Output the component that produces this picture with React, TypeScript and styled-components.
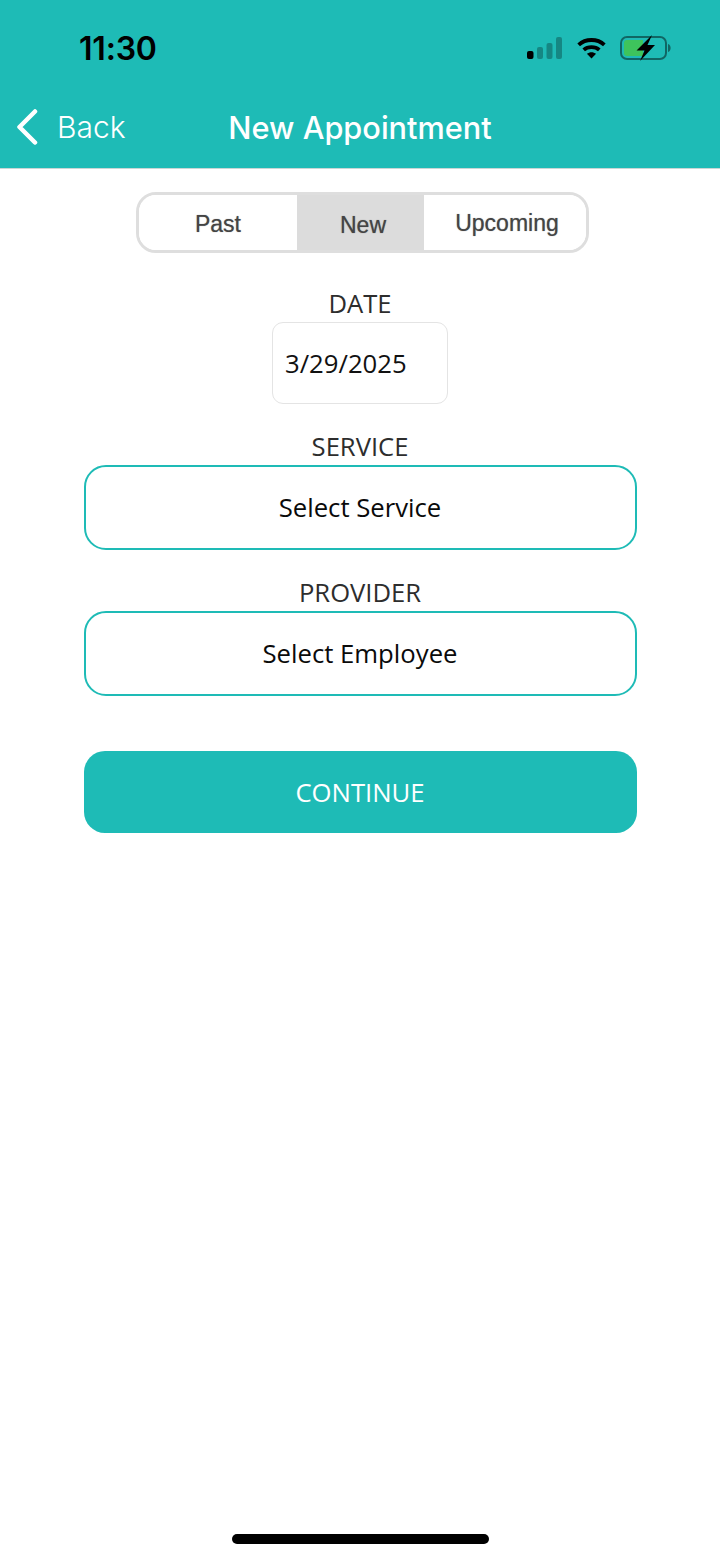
import React, { useState } from 'react';
import styled, { createGlobalStyle } from 'styled-components';

const TEAL = '#1ebbb6';

const GlobalStyle = createGlobalStyle`
  html, body {
    margin: 0;
    padding: 0;
    background: #fff;
  }
`;

const Screen = styled.div`
  display: flex;
  flex-direction: column;
  width: 720px;
  height: 1558px;
  overflow: hidden;
  background: #fff;
  font-family: 'Open Sans', sans-serif;
`;

const Header = styled.header`
  height: 168px;
  flex-shrink: 0;
  background: ${TEAL};
  border-bottom: 1px solid #c9d6d5;
  box-sizing: content-box;
  margin-bottom: -1px;
`;

const StatusBar = styled.div`
  display: flex;
  align-items: center;
  justify-content: space-between;
  height: 96px;
  padding: 0 48px 0 79px;
`;

const Time = styled.span`
  font-family: Inter, sans-serif;
  font-size: 32px;
  font-weight: 600;
  letter-spacing: -0.2px;
  color: #000;
`;

const StatusIcons = styled.div`
  display: flex;
  align-items: center;
  gap: 13px;
`;

const NavBar = styled.nav`
  position: relative;
  display: flex;
  align-items: center;
  justify-content: center;
  height: 62px;
`;

const BackLink = styled.button`
  position: absolute;
  left: 16px;
  top: 0;
  height: 100%;
  display: flex;
  align-items: center;
  gap: 19px;
  padding: 0;
  border: none;
  background: none;
  color: #fff;
  font-family: Inter, sans-serif;
  font-size: 30px;
  font-weight: 350;
`;

const NavTitle = styled.h1`
  margin: 0;
  color: #fff;
  font-family: Inter, sans-serif;
  font-size: 30.7px;
  font-weight: 500;
`;

const Content = styled.main`
  display: flex;
  flex-direction: column;
  align-items: center;
  flex: 1;
  padding-top: 24px;
`;

const Segments = styled.div`
  display: grid;
  grid-template-columns: 158px 127px 162px;
  width: 453px;
  height: 61px;
  box-sizing: border-box;
  overflow: hidden;
  margin: 0 0 36px 5px;
  border: 3px solid #dedede;
  border-radius: 20px;
`;

const Segment = styled.button<{ $active: boolean; $dx: number; $dy: number }>`
  padding: ${({ $dy }) => $dy}px 0 0 ${({ $dx }) => $dx}px;
  border: none;
  background: ${({ $active }) => ($active ? '#dcdcdc' : '#fff')};
  color: #444;
  font-family: 'Liberation Sans', Arial, sans-serif;
  font-size: 23px;
  text-shadow: 0 0 1px rgba(60, 60, 60, 0.6);
`;

const FieldLabel = styled.label`
  display: block;
  height: 33px;
  line-height: 30px;
  color: #2d2d2d;
  font-size: 25.6px;
  text-align: center;
`;

const DateBox = styled.div`
  display: flex;
  align-items: center;
  width: 176px;
  height: 82px;
  box-sizing: border-box;
  padding-left: 12px;
  margin-bottom: 28px;
  border: 1px solid #e4e4e4;
  border-radius: 11px;
  color: #111;
  font-size: 25.7px;
`;

const SelectBox = styled.button`
  width: 553px;
  height: 85px;
  box-sizing: border-box;
  margin-bottom: 28px;
  padding: 0;
  border: 2px solid ${TEAL};
  border-radius: 22px;
  background: #fff;
  color: #0a0a0a;
  font-family: 'Open Sans', sans-serif;
  font-size: 25.7px;
`;

const ContinueButton = styled.button`
  width: 553px;
  height: 82px;
  margin-top: 27px;
  padding: 0;
  border: none;
  border-radius: 21px;
  background: ${TEAL};
  color: #fff;
  font-family: 'Open Sans', sans-serif;
  font-size: 25.7px;
`;

const HomeBar = styled.div`
  align-self: center;
  flex-shrink: 0;
  width: 257px;
  height: 10px;
  margin-bottom: 14px;
  border-radius: 5px;
  background: #000;
`;

const SignalIcon = () => (
  <svg width="36" height="22" viewBox="0 0 36 22">
    <rect x="0" y="14" width="6.5" height="8" rx="2" fill="#000" />
    <rect x="10" y="10" width="6" height="12" rx="2" fill="#000" opacity="0.28" />
    <rect x="19.5" y="6" width="6" height="16" rx="2" fill="#000" opacity="0.28" />
    <rect x="29" y="0" width="6" height="22" rx="2" fill="#000" opacity="0.28" />
  </svg>
);

const WifiIcon = () => (
  <svg width="31" height="22" viewBox="0 0 32 24" fill="none" stroke="#000" strokeWidth="4.2">
    <path d="M2 8.5 C9.5 1.5 22.5 1.5 30 8.5" />
    <path d="M7.5 14 C12 10 20 10 24.5 14" />
    <path d="M16 23.5 L11 18.4 C14 16 18 16 21 18.4 Z" fill="#000" stroke="none" />
  </svg>
);

const BatteryIcon = () => (
  <svg width="52" height="26" viewBox="0 0 52 26">
    <rect x="1" y="2" width="45" height="22" rx="6" fill="none" stroke="#000" strokeOpacity="0.45" strokeWidth="2" />
    <path d="M4 8 a3 3 0 0 1 3 -3 H23 V21 H7 a3 3 0 0 1 -3 -3 Z" fill="#3ec45c" />
    <path d="M48 9 C51.5 10 51.5 16 48 17 Z" fill="#000" fillOpacity="0.45" />
    <path d="M32 0 L16.5 15.5 H24.5 L20 26 L35 10 H27.5 Z" fill="#000" />
  </svg>
);

const tabs = [
  { name: 'Past', dx: 0, dy: 3 },
  { name: 'New', dx: 5, dy: 5 },
  { name: 'Upcoming', dx: 4, dy: 1 },
];

const App: React.FC = () => {
  const [tab, setTab] = useState('New');

  return (
    <Screen>
      <GlobalStyle />
      <Header>
        <StatusBar>
          <Time>11:30</Time>
          <StatusIcons>
            <SignalIcon />
            <WifiIcon />
            <BatteryIcon />
          </StatusIcons>
        </StatusBar>
        <NavBar>
          <BackLink>
            <svg width="22" height="36" viewBox="0 0 22 36" fill="none" stroke="#fff" strokeWidth="4.5" strokeLinecap="round" strokeLinejoin="round">
              <path d="M19 2.5 L3.5 18 L19 33.5" />
            </svg>
            Back
          </BackLink>
          <NavTitle>New Appointment</NavTitle>
        </NavBar>
      </Header>
      <Content>
        <Segments>
          {tabs.map(({ name, dx, dy }) => (
            <Segment key={name} $active={tab === name} $dx={dx} $dy={dy} onClick={() => setTab(name)}>
              {name}
            </Segment>
          ))}
        </Segments>
        <FieldLabel>DATE</FieldLabel>
        <DateBox>3/29/2025</DateBox>
        <FieldLabel>SERVICE</FieldLabel>
        <SelectBox>Select Service</SelectBox>
        <FieldLabel>PROVIDER</FieldLabel>
        <SelectBox>Select Employee</SelectBox>
        <ContinueButton>CONTINUE</ContinueButton>
      </Content>
      <HomeBar />
    </Screen>
  );
};

export default App;
